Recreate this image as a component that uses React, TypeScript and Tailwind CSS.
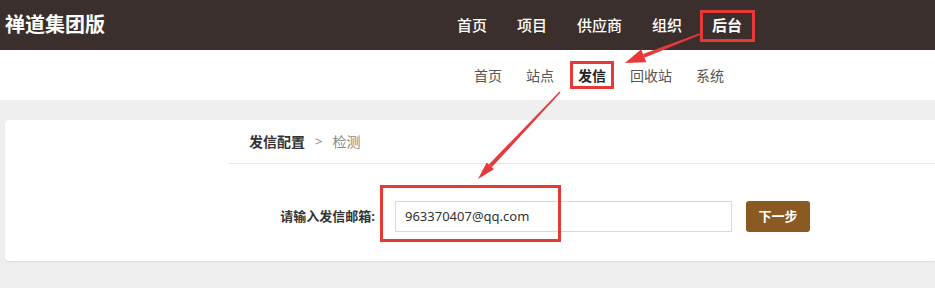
import React from "react";

export default function App() {
  const font = { fontFamily: '"Noto Sans", "Noto Sans CJK SC", sans-serif' };
  return (
    <div className="relative w-[935px] h-[288px] overflow-hidden bg-[#efefef]" style={font}>
      {/* header */}
      <div className="h-[50px] bg-[#3a2f2c] flex items-center">
        <div className="pl-[5px] text-white text-[20px] font-semibold w-[457px] leading-none">禅道集团版</div>
        <div className="flex items-center gap-[30px] text-[15px] leading-[21px] text-white font-medium">
          <span>首页</span>
          <span>项目</span>
          <span>供应商</span>
          <span>组织</span>
          <span className="font-bold relative inline-block">
            后台
            <span className="absolute -left-[12px] -top-[5px] w-[55px] h-[32px] border-[3px] border-[#e53935]"></span>
          </span>
        </div>
      </div>
      {/* sub nav */}
      <div className="h-[50px] bg-white flex items-center">
        <div className="w-[474px]"></div>
        <div className="flex items-center gap-[24px] text-[14px] leading-[21px] text-[#555]">
          <span>首页</span>
          <span>站点</span>
          <span className="font-bold text-[#222] relative inline-block">
            发信
            <span className="absolute -left-[8px] -top-[4px] w-[44px] h-[28px] border-[3px] border-[#e53935]"></span>
          </span>
          <span>回收站</span>
          <span>系统</span>
        </div>
      </div>
      {/* card */}
      <div className="pt-[20px] pl-[5px]">
        <div className="bg-white rounded-tl-[4px] rounded-bl-[4px] h-[141px] shadow-[0_1px_2px_rgba(0,0,0,0.08)]">
          <div className="ml-[223px] h-[44px] border-b border-[#e8e8e8] flex items-center pl-[21px] text-[14px]">
            <span className="font-bold text-[#333]">发信配置</span>
            <span className="mx-[10px] text-[#888] text-[13px]">&gt;</span>
            <span className="text-[#888]">检测</span>
          </div>
          <div className="flex items-center mt-[37px]">
            <div className="w-[370px] text-right text-[13px] font-bold text-[#333]">请输入发信邮箱:</div>
            <div className="relative ml-[20px]">
              <div className="w-[337px] h-[31px] border border-[#d9d9d9] flex items-center pl-[9px] text-[13px] text-[#333]">963370407@qq.com</div>
              <span className="absolute -left-[15px] -top-[16px] w-[181px] h-[57px] border-[3px] border-[#e53935]"></span>
            </div>
            <div className="ml-[14px] w-[64px] h-[31px] rounded-[3px] bg-[#8a5a21] text-white text-[13px] font-bold flex items-center justify-center">下一步</div>
          </div>
        </div>
      </div>
      {/* arrows */}
      <svg className="absolute left-0 top-0 pointer-events-none" width="935" height="288">
        <polygon points="700.3,34.7 699.7,33.3 643,53.9 644.4,57.7" fill="#e8383a" />
        <polygon points="625,63 641.2,49.3 646.2,62.3" fill="#e8383a" />
        <polygon points="560.5,92.5 559.5,91.5 488.8,164.5 491.8,167.3" fill="#e8383a" />
        <polygon points="478,179 486.7,162.5 493.9,169.3" fill="#e8383a" />
      </svg>
    </div>
  );
}
